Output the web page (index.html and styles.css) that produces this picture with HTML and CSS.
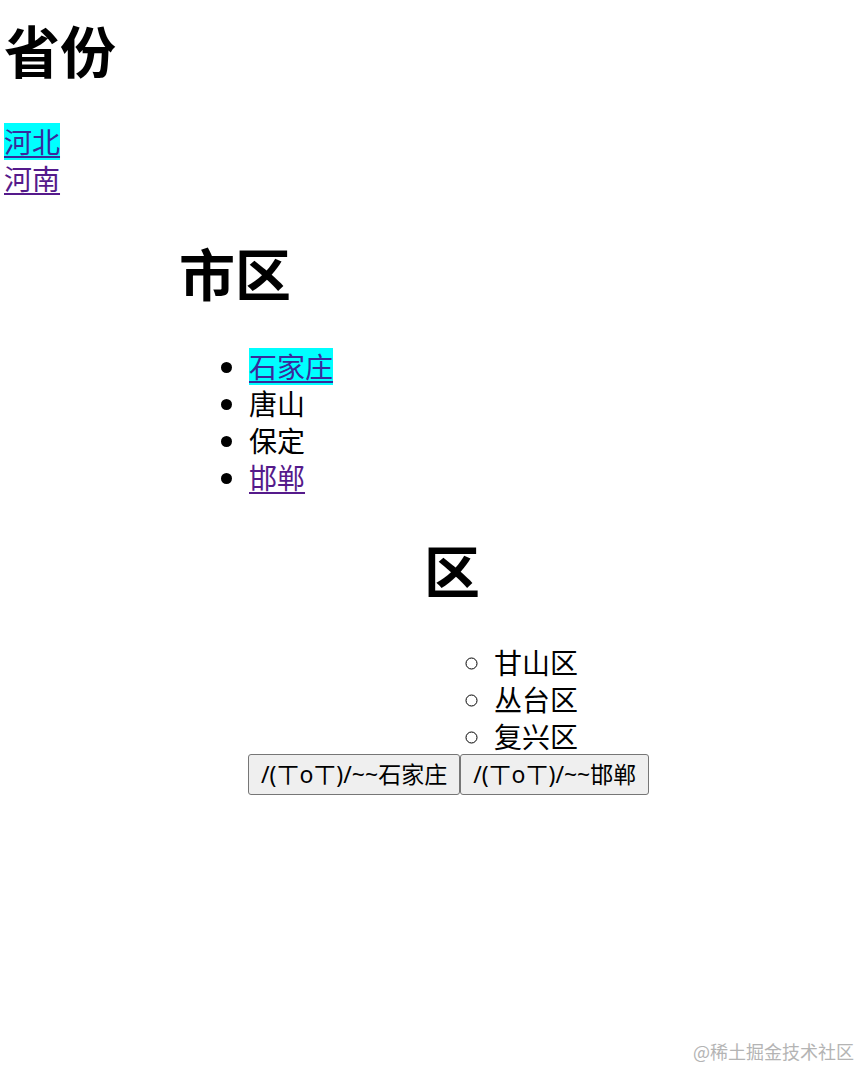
FILE: index.html
```html
<!DOCTYPE html>
<html lang="zh">
<head>
<meta charset="utf-8">
<title>省份</title>
<link rel="stylesheet" href="styles.css">
</head>
<body>
<div class="page">
  <h1 class="title title-top">省份</h1>
  <div class="links">
    <a class="link active" href="#">河北</a><br>
    <a class="link" href="#">河南</a>
  </div>
  <div class="city">
    <h1 class="title title-city">市区</h1>
    <ul class="list disc">
      <li><a class="link active" href="#">石家庄</a></li>
      <li>唐山</li>
      <li>保定</li>
      <li><a class="link" href="#">邯郸</a></li>
    </ul>
    <div class="district">
      <h1 class="title title-district">区</h1>
      <ul class="list circle">
        <li>甘山区</li>
        <li>丛台区</li>
        <li>复兴区</li>
      </ul>
    </div>
    <div class="buttons"><button class="btn">/(ㄒoㄒ)/~~石家庄</button><button class="btn">/(ㄒoㄒ)/~~邯郸</button></div>
  </div>
</div>
<div class="watermark">@稀土掘金技术社区</div>
</body>
</html>
```
FILE: styles.css
```css
html, body {
  margin: 0;
  padding: 0;
  background: #fff;
}
body {
  font-family: "Noto Sans CJK SC", "Noto Sans", sans-serif;
  color: #000;
  width: 861px;
  height: 1069px;
  position: relative;
  overflow: hidden;
}
.page {
  padding-left: 4px;
}
.title {
  font-size: 56px;
  font-weight: 700;
  line-height: 70px;
  margin: 0;
}
.title-top {
  margin-top: 14px;
}
.links {
  margin-top: 39px;
  font-size: 28px;
  line-height: 37px;
}
.link {
  color: #551a8b;
  text-decoration: underline;
  text-decoration-thickness: 1.5px;
  text-underline-offset: 3px;
}
.link.active {
  display: inline-block;
  height: 37px;
  line-height: 37px;
  background: #00ffff;
  color: #3a2a9c;
}
.city {
  margin-left: 175px;
}
.title-city {
  margin-top: 40px;
}
.list {
  margin: 41px 0 0;
  padding-left: 70px;
  font-size: 28px;
  line-height: 37px;
}
.disc {
  list-style: disc;
}
.circle {
  list-style: circle;
  margin-top: 40px;
  padding-left: 70px;
}
.district {
  margin-left: 245px;
}
.title-district {
  margin-top: 38px;
}
.buttons {
  display: flex;
  margin-left: 69px;
  margin-top: -1px;
}
.btn {
  font-family: "Noto Sans", "Noto Sans CJK SC", sans-serif;
  font-size: 23px;
  height: 41px;
  padding: 0 12px;
  background: #efefef;
  border: 1px solid #767676;
  border-radius: 3px;
  color: #000;
  line-height: 1;
}
.watermark {
  position: absolute;
  right: 7px;
  bottom: 6px;
  font-size: 18px;
  color: #b4b4b4;
  line-height: 24px;
}
```
